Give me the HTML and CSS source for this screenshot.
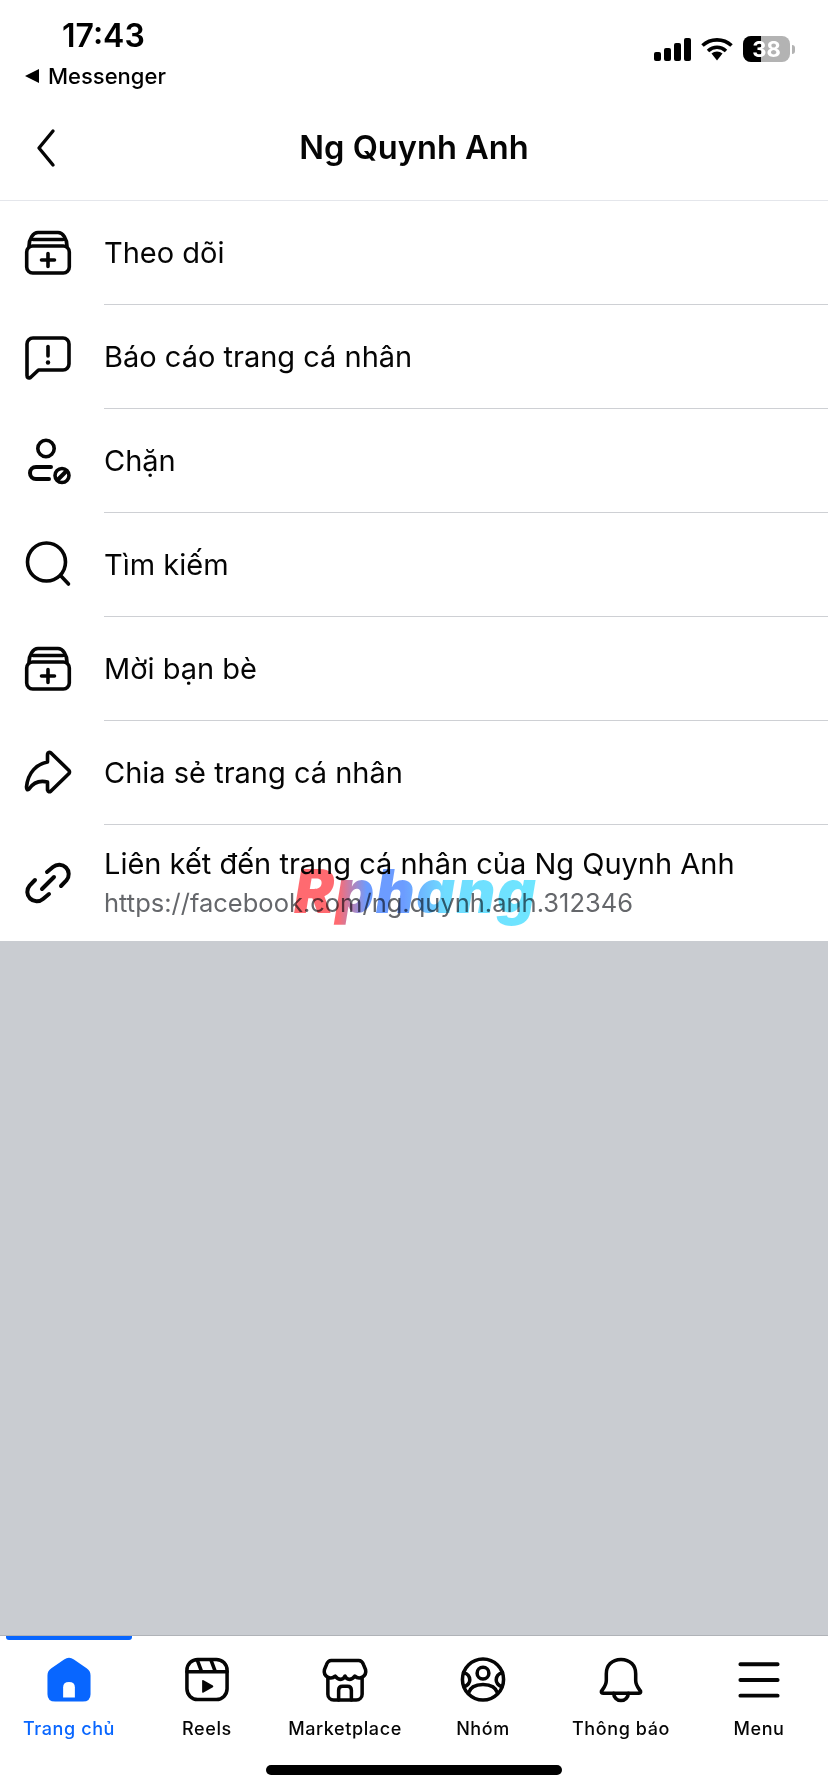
FILE: index.html
```html
<!DOCTYPE html>
<html lang="vi">
<head>
  <meta charset="UTF-8">
  <meta name="viewport" content="width=device-width, initial-scale=1.0">
  <title>Ng Quynh Anh</title>
  <link rel="stylesheet" href="styles.css">
</head>
<body>

<div id="page">
  <div class="status">
    <div class="status-left">
      <div class="time">17:43</div>
      <div class="back-app"><span class="tri"></span>Messenger</div>
    </div>
    <div class="status-right">
      <div class="signal"><i class="b1"></i><i class="b2"></i><i class="b3"></i><i class="b4"></i></div>
      <svg class="wifi" width="32" height="24" viewBox="0 0 32 24">
        <path d="M1.5 8.5C9.5 1 22.5 1 30.5 8.5" class="wave"/>
        <path d="M7 14C12.5 9 19.5 9 25 14" class="wave"/>
        <path d="M10.5 16.5L16 23.5 21.5 16.5C18.5 13.8 13.5 13.8 10.5 16.5Z"/>
      </svg>
      <div class="battery"><div class="battery-level"></div><span class="battery-text">38</span></div>
      <div class="battery-nub"></div>
    </div>
  </div>

  <div class="header">
    <svg class="back" width="24" height="40" viewBox="0 0 24 40"><path d="M19 3L5 20 19 37"/></svg>
    <div class="title">Ng Quynh Anh</div>
  </div>

  <div class="list">
    <div class="row">
      <svg class="icon" viewBox="0 0 48 48"><rect x="2.700" y="17" width="42.600" height="27" rx="6"/><path d="M5 17C5 10 9 3.500 14 3.500H34C39 3.500 43 10 43 17M9 10.500H39M24 24.500V37.500M17.500 31H30.500"/></svg>
      <div class="row-body"><div class="row-label">Theo dõi</div></div>
    </div>
    <div class="row">
      <svg class="icon" viewBox="0 0 48 48"><path d="M9 5H39A6 6 0 0 1 45 11V31A6 6 0 0 1 39 37H14.500L6.500 44.500Q3 46 3 42.500V11A6 6 0 0 1 9 5Z"/><path d="M24 13.500V23"/><circle class="fill" cx="24" cy="29.500" r="2.200"/></svg>
      <div class="row-body"><div class="row-label">Báo cáo trang cá nhân</div></div>
    </div>
    <div class="row">
      <svg class="icon" viewBox="0 0 48 48"><circle cx="22" cy="11.500" r="8.200"/><path class="thick" d="M27 30H12A6 6 0 0 0 12 42H25"/><circle cx="38" cy="38.500" r="7"/><path class="thick" d="M34 42.500L42 34.500"/></svg>
      <div class="row-body"><div class="row-label">Chặn</div></div>
    </div>
    <div class="row">
      <svg class="icon" viewBox="0 0 48 48"><circle cx="22.500" cy="21" r="19"/><path d="M37 35L44.500 43"/></svg>
      <div class="row-body"><div class="row-label">Tìm kiếm</div></div>
    </div>
    <div class="row">
      <svg class="icon" viewBox="0 0 48 48"><rect x="2.700" y="17" width="42.600" height="27" rx="6"/><path d="M5 17C5 10 9 3.500 14 3.500H34C39 3.500 43 10 43 17M9 10.500H39M24 24.500V37.500M17.500 31H30.500"/></svg>
      <div class="row-body"><div class="row-label">Mời bạn bè</div></div>
    </div>
    <div class="row">
      <svg class="icon" viewBox="0 0 48 48"><path d="M24 4Q25 2.500 27 4L45 21.500Q46 23 45 24.500L27 42Q24.500 44 23.500 41V33C15 31 9 34 5 40Q2.500 42 2.500 38C4 23 13 15 23.500 13V6Q23.500 4.500 24 4Z"/></svg>
      <div class="row-body"><div class="row-label">Chia sẻ trang cá nhân</div></div>
    </div>
    <div class="row row-last">
      <svg class="icon" viewBox="0 0 48 48"><path class="thick" d="M23 13L29 8A9.500 9.500 0 0 1 42.400 21.400L37 27M25 35L19 40A9.500 9.500 0 0 1 5.600 26.600L11 21M18 30L30 18"/></svg>
      <div class="row-body">
        <div class="row-label">Liên kết đến trang cá nhân của Ng Quynh Anh</div>
        <div class="row-sub">https://facebook.com/ng.quynh.anh.312346</div>
      </div>
    </div>
  </div>

  <div class="watermark">Rphang</div>

  <div class="backdrop"></div>

  <div class="tabbar">
    <div class="tabs">
      <div class="tab active">
        <svg class="tab-icon" viewBox="0 0 48 48"><path class="solid" d="M19 3.500Q24 0 29 3.500L42 12.500Q46 15 46 20V39Q46 46.500 38 46.500H10Q2 46.500 2 39V20Q2 15 6 12.500Z"/><path class="door" d="M18 42.500V32Q18 26.500 24 26.500 30 26.500 30 32V42.500Z"/></svg>
        <div class="tab-label">Trang chủ</div>
      </div>
      <div class="tab">
        <svg class="tab-icon" viewBox="0 0 48 48"><rect x="3.500" y="3.500" width="41" height="41" rx="11"/><path d="M3.500 16H44.500M14 4L18.500 16M28 4L32.500 16"/><path class="fill" d="M19 25.500Q19 24 20.500 24.700L30 30Q31 31 30 32L20.500 37.300Q19 38 19 36.500Z"/></svg>
        <div class="tab-label">Reels</div>
      </div>
      <div class="tab">
        <svg class="tab-icon" viewBox="0 0 48 48"><path d="M10 4.500H38C41 4.500 42 6 43 9L45 14C46.500 21 38.500 25 34 20.500 30.500 25 26 25 24 20.500 22 25 17.500 25 14 20.500 9.500 25 1.500 21 3 14L5 9C6 6 7 4.500 10 4.500Z"/><path d="M6.500 23V39A6 6 0 0 0 12.500 45H35.500A6 6 0 0 0 41.500 39V23"/><path d="M17.500 45V35Q17.500 31 21.500 31H26.500Q30.500 31 30.500 35V45"/></svg>
        <div class="tab-label">Marketplace</div>
      </div>
      <div class="tab">
        <svg class="tab-icon" viewBox="0 0 48 48"><circle cx="24" cy="24" r="21"/><circle cx="24" cy="17.500" r="6"/><path d="M9 38C11 31 17 29 24 29 31 29 37 31 39 38M4 17C8 18 10.500 21 10.500 24.500 10.500 28 8 30 5 31.500M44 17C40 18 37.500 21 37.500 24.500 37.500 28 40 30 43 31.500"/></svg>
        <div class="tab-label">Nhóm</div>
      </div>
      <div class="tab">
        <svg class="tab-icon" viewBox="0 0 48 48"><path d="M24 3.500C14.500 3.500 9 10 9 18V25C9 30 6 33 4 36Q3.500 38 6 38H42Q44.500 38 44 36C42 33 39 30 39 25V18C39 10 33.500 3.500 24 3.500Z"/><path d="M16.500 38A7.500 7.500 0 0 0 31.500 38"/></svg>
        <div class="tab-label">Thông báo</div>
      </div>
      <div class="tab">
        <svg class="tab-icon menu-icon" viewBox="0 0 48 48"><path d="M5 8.500H43M5 24.500H43M5 40.500H43"/></svg>
        <div class="tab-label">Menu</div>
      </div>
    </div>
    <div class="home-bar"></div>
  </div>
</div>

</body>
</html>
```

FILE: styles.css
```css
html, body {
  margin: 0;
  padding: 0;
}

body {
  font-family: Inter, "Noto Sans", sans-serif;
  color: #050505;
  background-color: #fff;
}

#page {
  position: relative;
  width: 828px;
  height: 1792px;
  display: flex;
  flex-direction: column;
  overflow: hidden;
}

/* status bar */
.status {
  height: 96px;
  flex: none;
  display: flex;
  justify-content: space-between;
}

.status-left {
  padding: 19px 0 0 25px;
}

.time {
  padding-left: 37px;
  font-size: 32px;
  font-weight: 600;
  line-height: 34px;
  color: #000;
}

.back-app {
  display: flex;
  align-items: center;
  margin-top: 9px;
  font-size: 22px;
  font-weight: 500;
  line-height: 28px;
  color: #000;
}

.tri {
  width: 0;
  height: 0;
  margin-right: 9px;
  border-top: 7px solid transparent;
  border-bottom: 7px solid transparent;
  border-right: 14px solid #000;
}

.status-right {
  display: flex;
  align-items: center;
  height: 26px;
  padding: 36px 33px 0 0;
}

.signal {
  display: flex;
  align-items: flex-end;
  gap: 3px;
  height: 23px;
}

.signal i {
  display: block;
  width: 7px;
  border-radius: 2px;
  background-color: #000;
}

.b1 { height: 9px; }
.b2 { height: 13px; }
.b3 { height: 18px; }
.b4 { height: 23px; }

.wifi {
  margin-left: 10px;
}

.wifi path {
  fill: #000;
}

.wifi .wave {
  fill: none;
  stroke: #000;
  stroke-width: 3.6;
}

.battery {
  position: relative;
  width: 47px;
  height: 26px;
  margin-left: 10px;
  border-radius: 8px;
  background-color: #b3b3b3;
  overflow: hidden;
}

.battery-level {
  width: 18px;
  height: 100%;
  background-color: #000;
}

.battery-text {
  position: absolute;
  left: 0;
  right: 0;
  top: 0;
  font-size: 22px;
  font-weight: 700;
  line-height: 26px;
  text-align: center;
  color: #fff;
}

.battery-nub {
  width: 3px;
  height: 9px;
  margin-left: 2px;
  border-radius: 0 3px 3px 0;
  background-color: #b3b3b3;
}

/* header */
.header {
  position: relative;
  height: 104px;
  flex: none;
  display: flex;
  align-items: center;
  justify-content: center;
  border-bottom: 1px solid #e4e6eb;
}

.back {
  position: absolute;
  left: 34px;
  top: 32px;
}

.back path {
  fill: none;
  stroke: #050505;
  stroke-width: 3.4;
  stroke-linecap: round;
  stroke-linejoin: round;
}

.title {
  margin-bottom: 2px;
  font-size: 32.6px;
  font-weight: 600;
}

/* list */
.list {
  flex: none;
}

.row {
  display: flex;
  height: 104px;
  padding-left: 24px;
  box-sizing: border-box;
}

.row-last {
  height: 116px;
}

.icon {
  width: 48px;
  height: 48px;
  flex: none;
  align-self: center;
  margin-right: 32px;
}

.icon, .tab-icon {
  fill: none;
  stroke: #050505;
  stroke-width: 3.6;
  stroke-linecap: round;
  stroke-linejoin: round;
}

.icon .thick {
  stroke-width: 4;
}

.icon .fill, .tab-icon .fill {
  fill: #050505;
  stroke: none;
}

.row-body {
  flex: 1;
  display: flex;
  flex-direction: column;
  justify-content: center;
  border-bottom: 1px solid #ced0d4;
}

.row-last .row-body {
  border-bottom: none;
}

.row-label {
  font-size: 29px;
  line-height: 36px;
}

.row-sub {
  margin-top: 4px;
  font-size: 25.5px;
  line-height: 34px;
  color: #65676b;
}

.watermark {
  position: absolute;
  left: 294px;
  top: 853px;
  font-size: 60px;
  font-weight: 900;
  font-style: italic;
  line-height: 76px;
  letter-spacing: 1.5px;
  background: linear-gradient(90deg, #ff6a70 0, #ff6a70 18%, #6c9cff 30%, #6c9cff 45%, #6fdcff 62%, #6fe6ff 100%);
  -webkit-background-clip: text;
  background-clip: text;
  color: transparent;
  mix-blend-mode: multiply;
}

.backdrop {
  flex: 1;
  background-color: #c9ccd1;
}

/* bottom tabs */
.tabbar {
  height: 157px;
  flex: none;
  box-sizing: border-box;
  border-top: 1px solid #b0b3b8;
  background-color: #fff;
}

.tabs {
  display: flex;
  height: 105px;
}

.tab {
  position: relative;
  flex: 1;
  display: flex;
  flex-direction: column;
  align-items: center;
  padding-top: 20px;
}

.active::before {
  content: "";
  position: absolute;
  left: 6px;
  right: 6px;
  top: 0;
  height: 4px;
  border-radius: 0 0 3px 3px;
  background-color: #0866ff;
}

.tab-icon {
  width: 48px;
  height: 48px;
}

.tab-icon .solid {
  fill: #0866ff;
  stroke: none;
}

.tab-icon .door {
  fill: #fff;
  stroke: none;
}

.menu-icon {
  stroke-width: 4;
}

.tab-label {
  margin-top: 14px;
  font-size: 18px;
  font-weight: 500;
  line-height: 24px;
  letter-spacing: 0.6px;
  white-space: nowrap;
}

.active .tab-label {
  color: #0866ff;
}

.home-bar {
  width: 296px;
  height: 10px;
  margin: 24px auto 0;
  border-radius: 5px;
  background-color: #000;
}
```
